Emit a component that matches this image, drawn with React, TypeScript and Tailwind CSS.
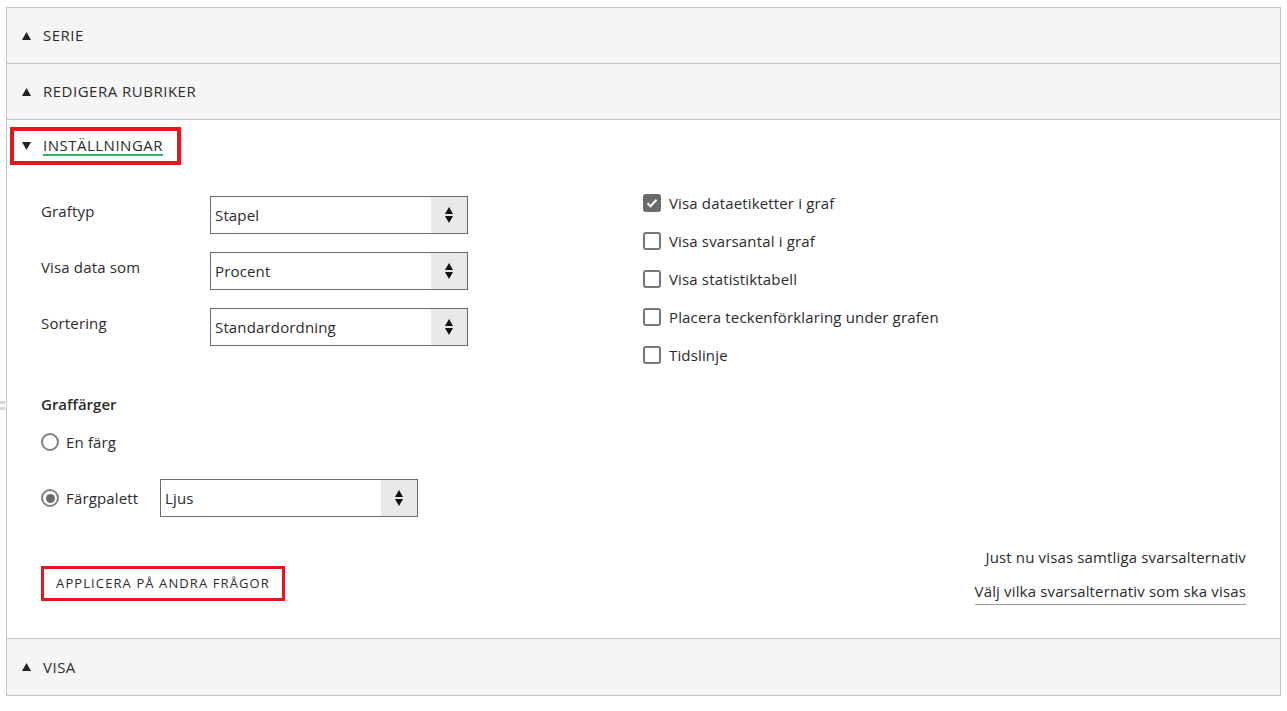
const font = { fontFamily: '"Open Sans", "Liberation Sans", sans-serif' }

function Caret({ up = true }: { up?: boolean }) {
  return (
    <svg width="9" height="8" viewBox="0 0 9 8" className="shrink-0">
      {up ? <path d="M4.5 0L9 8H0z" fill="#222" /> : <path d="M0 0h9L4.5 8z" fill="#222" />}
    </svg>
  )
}

function SectionHeader({ title, last = false }: { title: string; last?: boolean }) {
  return (
    <div
      className={`flex h-[56px] items-center gap-[12px] bg-[#f5f5f5] pl-[15px] text-[15px] tracking-[0.5px] text-[#2b2b2b] ${
        last ? '' : 'border-b border-[#c6c6c6]'
      }`}
    >
      <Caret />
      <span>{title}</span>
    </div>
  )
}

function Select({ value }: { value: string }) {
  return (
    <div className="flex h-[38px] w-[258px] items-stretch border border-[#6b6b6b] bg-white">
      <div className="flex flex-1 items-center pl-[4px] text-[15px] tracking-[0.15px] text-[#2b2b2b]">{value}</div>
      <div className="flex w-[36px] flex-col items-center justify-center gap-[2px] bg-[#e9e9e9]">
        <svg width="8" height="7" viewBox="0 0 8 7"><path d="M4 0L8 7H0z" fill="#111" /></svg>
        <svg width="8" height="7" viewBox="0 0 8 7"><path d="M0 0h8L4 7z" fill="#111" /></svg>
      </div>
    </div>
  )
}

function Checkbox({ label, checked = false }: { label: string; checked?: boolean }) {
  return (
    <div className="flex h-[38px] items-center gap-[8px]">
      {checked ? (
        <span className="flex h-[18px] w-[18px] items-center justify-center rounded-[3px] bg-[#6a6a6a]">
          <svg width="12" height="10" viewBox="0 0 12 10">
            <path d="M1.5 5.2l3 3L10.5 1.8" fill="none" stroke="#fff" strokeWidth="2" />
          </svg>
        </span>
      ) : (
        <span className="h-[18px] w-[18px] rounded-[3px] border-2 border-[#777] bg-white" />
      )}
      <span className="text-[15px] tracking-[0.15px] text-[#2b2b2b]">{label}</span>
    </div>
  )
}

function Radio({ checked = false }: { checked?: boolean }) {
  return (
    <span className="flex h-[18px] w-[18px] items-center justify-center rounded-full border-2 border-[#808080]">
      {checked && <span className="h-[9px] w-[9px] rounded-full bg-[#6a6a6a]" />}
    </span>
  )
}

export default function App() {
  const rows = [
    { label: 'Graftyp', value: 'Stapel' },
    { label: 'Visa data som', value: 'Procent' },
    { label: 'Sortering', value: 'Standardordning' },
  ]

  return (
    <div className="relative h-[711px] w-[1287px] bg-white pl-[6px] pt-[7px]" style={font}>
      {/* little grey tab marks on the left edge */}
      <div className="absolute left-0 top-[401px] flex flex-col gap-[3px]">
        <span className="h-[3px] w-[5px] bg-[#d5d5d5]" />
        <span className="h-[3px] w-[5px] bg-[#d5d5d5]" />
      </div>

      <div className="w-[1275px] border border-[#c6c6c6]">
        <SectionHeader title="SERIE" />
        <SectionHeader title="REDIGERA RUBRIKER" />

        {/* Expanded section */}
        <div className="flex h-[519px] flex-col border-b border-[#c6c6c6] bg-white">
          <div className="pl-[3px] pt-[7px]">
            <div className="inline-flex h-[38px] w-[171px] items-center gap-[12px] border-[4px] border-[#e8141c] pl-[8px] text-[15px] tracking-[0.5px] text-[#2b2b2b]">
              <Caret up={false} />
              <span className="border-b-2 border-[#2fb56a] leading-[17px]">INSTÄLLNINGAR</span>
            </div>
          </div>

          <div className="flex flex-1 pl-[34px] pt-[31px]">
            {/* Left column */}
            <div className="w-[602px]">
              <div className="flex flex-col gap-[18px]">
                {rows.map((r) => (
                  <div key={r.label} className="flex items-start">
                    <div className="w-[169px] pt-[4px] text-[15px] tracking-[0.15px] text-[#2b2b2b]">{r.label}</div>
                    <Select value={r.value} />
                  </div>
                ))}
              </div>

              <div className="pt-[47px] text-[15px] font-semibold text-[#2b2b2b]">Graffärger</div>
              <div className="flex items-center gap-[7px] pt-[15px] text-[15px] tracking-[0.15px] text-[#2b2b2b]">
                <Radio />
                <span>En färg</span>
              </div>
              <div className="flex items-center pt-[26px] text-[15px] tracking-[0.15px] text-[#2b2b2b]">
                <Radio checked />
                <span className="ml-[7px] w-[94px]">Färgpalett</span>
                <Select value="Ljus" />
              </div>

              <div className="pt-[49px]">
                <div className="inline-flex h-[35px] w-[244px] items-center justify-center border-[3px] border-[#e8141c] text-[13px] tracking-[1.1px] text-[#2b2b2b]">
                  APPLICERA PÅ ANDRA FRÅGOR
                </div>
              </div>
            </div>

            {/* Right column */}
            <div className="flex flex-1 flex-col">
              <div className="-mt-[12px] flex flex-col">
                <Checkbox label="Visa dataetiketter i graf" checked />
                <Checkbox label="Visa svarsantal i graf" />
                <Checkbox label="Visa statistiktabell" />
                <Checkbox label="Placera teckenförklaring under grafen" />
                <Checkbox label="Tidslinje" />
              </div>
              <div className="mt-auto flex flex-col items-end pb-[33px] pr-[34px] text-[15px] tracking-[0.15px] text-[#2b2b2b]">
                <div>Just nu visas samtliga svarsalternativ</div>
                <div className="mt-[11px] border-b border-[#9a9a9a] pb-[2px]">Välj vilka svarsalternativ som ska visas</div>
              </div>
            </div>
          </div>
        </div>

        <SectionHeader title="VISA" last />
      </div>
    </div>
  )
}
